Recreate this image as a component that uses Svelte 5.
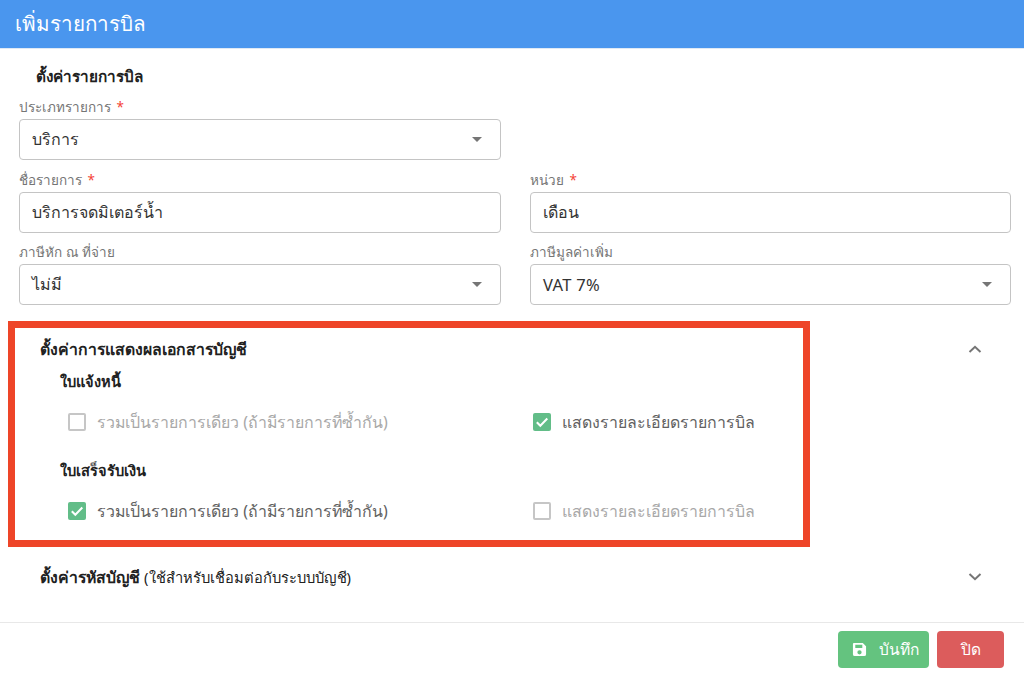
<script>
  const invoice = [
    { text: 'รวมเป็นรายการเดียว (ถ้ามีรายการที่ซ้ำกัน)', checked: false },
    { text: 'แสดงรายละเอียดรายการบิล', checked: true }
  ];
  const receipt = [
    { text: 'รวมเป็นรายการเดียว (ถ้ามีรายการที่ซ้ำกัน)', checked: true },
    { text: 'แสดงรายละเอียดรายการบิล', checked: false }
  ];
  const groups = [
    { title: 'ใบแจ้งหนี้', items: invoice },
    { title: 'ใบเสร็จรับเงิน', items: receipt }
  ];
</script>

<div class="dialog">
  <header class="top">เพิ่มรายการบิล</header>

  <section class="form">
    <h3 class="form-title">ตั้งค่ารายการบิล</h3>
    <div class="grid">
      <div class="field">
        <span class="label">ประเภทรายการ <i>*</i></span>
        <div class="input">บริการ<span class="caret"></span></div>
      </div>
      <div></div>
      <div class="field">
        <span class="label">ชื่อรายการ <i>*</i></span>
        <div class="input">บริการจดมิเตอร์น้ำ</div>
      </div>
      <div class="field">
        <span class="label">หน่วย <i>*</i></span>
        <div class="input">เดือน</div>
      </div>
      <div class="field">
        <span class="label">ภาษีหัก ณ ที่จ่าย</span>
        <div class="input">ไม่มี<span class="caret"></span></div>
      </div>
      <div class="field">
        <span class="label">ภาษีมูลค่าเพิ่ม</span>
        <div class="input"><span class="latin">VAT 7%</span><span class="caret"></span></div>
      </div>
    </div>
  </section>

  <section class="panel open">
    <div class="panel-head">
      <h3>ตั้งค่าการแสดงผลเอกสารบัญชี</h3>
      <svg width="16" height="10" viewBox="0 0 16 10"><path d="M2.500 8 8 2.800 13.500 8" fill="none" stroke="#757575" stroke-width="2"/></svg>
    </div>
    {#each groups as group}
      <h4>{group.title}</h4>
      <div class="checks">
        {#each group.items as item}
          <div class="check" class:on={item.checked}>
            <span class="box">
              {#if item.checked}
                <svg width="18" height="18" viewBox="0 0 18 18"><path d="M3.800 9.300 7.300 12.800 14.300 5.500" fill="none" stroke="#fff" stroke-width="2"/></svg>
              {/if}
            </span>
            {item.text}
          </div>
        {/each}
      </div>
    {/each}
    <div class="highlight"></div>
  </section>

  <section class="panel closed">
    <div class="panel-head">
      <h3>ตั้งค่ารหัสบัญชี <span>(ใช้สำหรับเชื่อมต่อกับระบบบัญชี)</span></h3>
      <svg width="16" height="10" viewBox="0 0 16 10"><path d="M2.500 2 8 7.200 13.500 2" fill="none" stroke="#757575" stroke-width="2"/></svg>
    </div>
  </section>

  <footer class="actions">
    <button class="save">
      <svg width="15" height="15" viewBox="0 0 16 16"><path fill="#fff" fill-rule="evenodd" d="M2 1h9.500L15 4.500V13a2 2 0 0 1-2 2H3a2 2 0 0 1-2-2V2a1 1 0 0 1 1-1Zm1.500 2v3.500h7.500V3ZM8 8.700a2.300 2.300 0 1 0 0 4.600 2.300 2.300 0 0 0 0-4.600Z"/></svg>
      <span>บันทึก</span>
    </button>
    <button class="close">ปิด</button>
  </footer>
</div>

<style>
  :global(body) {
    background: #fff;
    font-family: "Noto Sans", "Open Sans", "DejaVu Sans", sans-serif;
  }

  .dialog {
    width: 1024px;
    height: 674px;
    overflow: hidden;
    display: flex;
    flex-direction: column;
  }

  .top {
    height: 49px;
    background: #4a96ee;
    border-bottom: 1px solid #dfe9f5;
    box-sizing: border-box;
    padding: 0 15px;
    color: #fff;
    font-size: 20.600px;
    line-height: 47px;
  }

  .form {
    padding: 16px 13px 0 19px;
  }

  .form-title {
    margin: 0 0 10px 17px;
    font-size: 15.300px;
    line-height: 22px;
    font-weight: 700;
    color: #212121;
  }

  .grid {
    display: grid;
    grid-template-columns: 482px 481px;
    column-gap: 29px;
    row-gap: 9.500px;
  }

  .field {
    display: flex;
    flex-direction: column;
    gap: 2px;
  }

  .label {
    font-size: 13.500px;
    line-height: 20px;
    color: #757575;
  }

  .label i {
    font-style: normal;
    color: #f44336;
    margin-left: 2px;
  }

  .input {
    height: 41px;
    box-sizing: border-box;
    border: 1px solid #c4c4c4;
    border-radius: 4px;
    padding: 0 12px;
    display: flex;
    align-items: center;
    justify-content: space-between;
    font-size: 16px;
    color: #333;
  }

  .latin {
    font-size: 16.500px;
    letter-spacing: 0.300px;
  }

  .caret {
    width: 0;
    height: 0;
    border-left: 5px solid transparent;
    border-right: 5px solid transparent;
    border-top: 5px solid #757575;
    margin-right: 6px;
  }

  .panel {
    position: relative;
    padding: 0 40px;
  }

  .open {
    margin-top: 16px;
    height: 226px;
    box-sizing: border-box;
    padding-top: 17px;
  }

  .panel-head {
    display: flex;
    align-items: center;
    justify-content: space-between;
    height: 22px;
    padding-right: 1px;
  }

  .panel-head h3 {
    margin: 0;
    font-size: 15.800px;
    font-weight: 700;
    color: #212121;
  }

  .panel-head h3 span {
    font-size: 14.700px;
    font-weight: 400;
  }

  .panel h4 {
    margin: 11px 0 0 20px;
    font-size: 14.600px;
    line-height: 21px;
    font-weight: 700;
    color: #212121;
  }

  .checks {
    display: grid;
    grid-template-columns: 465px 1fr;
    padding: 20px 0 0 28px;
    margin-bottom: 28px;
  }

  .check {
    display: flex;
    align-items: center;
    gap: 11px;
    font-size: 15.900px;
    line-height: 20px;
    color: #a8a8a8;
  }

  .check.on {
    color: #616161;
  }

  .box {
    width: 18px;
    height: 18px;
    box-sizing: border-box;
    border: 2px solid #c6c6c6;
    border-radius: 2px;
    position: relative;
    flex: none;
  }

  .on .box {
    border: 0;
    background: #62bd88;
  }

  .box svg {
    display: block;
  }

  .highlight {
    position: absolute;
    left: 8px;
    top: 0;
    width: 802px;
    height: 226px;
    box-sizing: border-box;
    border: 7px solid #ee4528;
    pointer-events: none;
  }

  .closed {
    margin-top: 19px;
  }

  .actions {
    margin-top: auto;
    height: 52px;
    box-sizing: border-box;
    border-top: 1px solid #e8e8e8;
    padding: 8px 20px 0 0;
    display: flex;
    justify-content: flex-end;
    gap: 8px;
  }

  button {
    height: 37px;
    border: 0;
    border-radius: 4px;
    color: #fff;
    font: 500 15.500px "Noto Sans", "Open Sans", sans-serif;
    display: flex;
    align-items: center;
    justify-content: center;
  }

  .save {
    width: 91px;
    background: #64c37f;
    gap: 12px;
    padding: 0 0 0 4px;
  }

  .close {
    width: 67px;
    background: #dc5c5c;
  }
</style>
